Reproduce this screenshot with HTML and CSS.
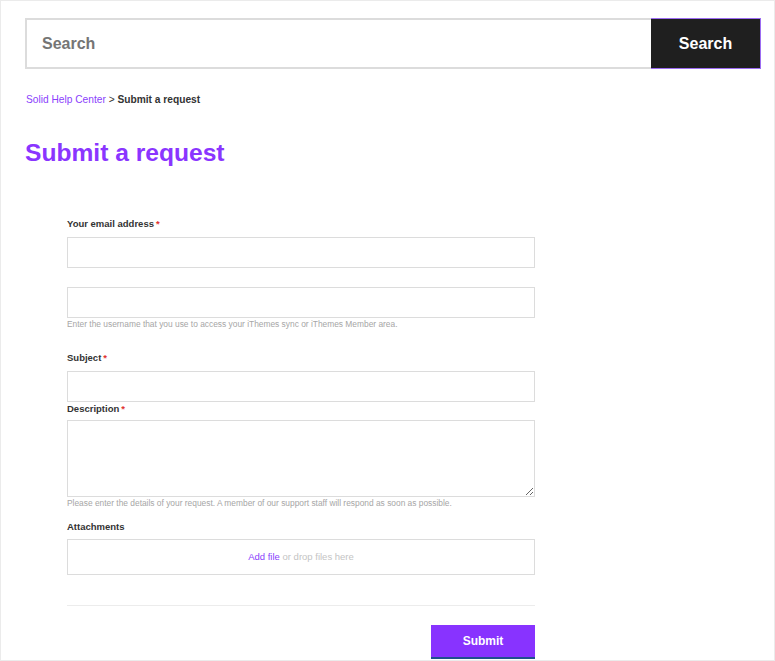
FILE: index.html
```html
<!DOCTYPE html>
<html lang="en">
<head>
    <meta charset="UTF-8">
    <title>Submit a request – Solid Help Center</title>
    <link rel="stylesheet" href="styles.css">
</head>
<body>
    <div class="page">
        <form class="search">
            <input type="search" class="search-input" placeholder="Search">
            <button type="submit" class="search-button">Search</button>
        </form>

        <nav class="breadcrumbs">
            <a href="#">Solid Help Center</a> &gt; <span class="current">Submit a request</span>
        </nav>

        <h1>Submit a request</h1>

        <form class="request-form">
            <label class="label label-first">Your email address<span class="req">*</span></label>
            <input type="email" class="field">

            <input type="text" class="field field-username">
            <p class="hint">Enter the username that you use to access your iThemes sync or iThemes Member area.</p>

            <label class="label label-subject">Subject<span class="req">*</span></label>
            <input type="text" class="field">

            <label class="label label-description">Description<span class="req">*</span></label>
            <textarea class="field field-area"></textarea>
            <p class="hint">Please enter the details of your request. A member of our support staff will respond as soon as possible.</p>

            <label class="label label-attach">Attachments</label>
            <div class="dropzone"><a href="#">Add file</a> or drop files here</div>

            <div class="form-footer">
                <button type="submit" class="submit">Submit</button>
            </div>
        </form>
    </div>
</body>
</html>
```

FILE: styles.css
```css
* {
    box-sizing: border-box;
}
body {
    margin: 0;
    font-family: 'Liberation Sans', Arial, sans-serif;
    color: #333;
    background: #fff;
}
.page {
    height: 661px;
    border: 1px solid #ebebeb;
    padding: 17px 13px 0 24px;
    overflow: hidden;
}
.search {
    display: flex;
    height: 51px;
}
.search-input {
    flex: 1;
    border: 2px solid #dcdcdc;
    border-right: none;
    padding: 0 15px;
    font-family: inherit;
    font-size: 16px;
    font-weight: bold;
    outline: none;
}
.search-input::placeholder {
    color: #757575;
}
.search-button {
    width: 110px;
    background: #1f1f1f;
    color: #fff;
    border: 1px solid #9c6cf2;
    border-left: none;
    font-family: inherit;
    font-size: 16px;
    font-weight: bold;
    cursor: pointer;
}
.breadcrumbs {
    margin-top: 24px;
    padding-left: 1px;
    font-size: 10.2px;
    line-height: 14px;
    color: #333;
}
.breadcrumbs a {
    color: #8a3ffc;
    text-decoration: none;
}
.breadcrumbs .current {
    font-weight: bold;
}
h1 {
    margin: 31px 0 0;
    font-size: 24.6px;
    line-height: 30px;
    color: #8a35ff;
}
.request-form {
    width: 468px;
    margin-left: 42px;
}
.label {
    display: block;
    font-size: 9.5px;
    font-weight: bold;
    line-height: 14px;
    color: #333;
}
.req {
    color: #e0332f;
    margin-left: 2px;
}
.label-first {
    margin-top: 49px;
    margin-bottom: 6px;
}
.label-subject {
    margin-top: 21px;
    margin-bottom: 6px;
}
.label-description {
    margin-bottom: 4px;
}
.label-attach {
    margin-top: 11px;
    margin-bottom: 5px;
}
.field {
    display: block;
    width: 100%;
    height: 31px;
    border: 1px solid #dcdcdc;
    padding: 0 8px;
    font-family: inherit;
}
.field-username {
    margin-top: 19px;
}
.field-area {
    height: 77px;
    resize: vertical;
}
.hint {
    margin: 1px 0 0;
    font-size: 8.4px;
    line-height: 11px;
    color: #a6a6a6;
}
.dropzone {
    height: 36px;
    border: 1px solid #dcdcdc;
    text-align: center;
    line-height: 34px;
    font-size: 9.5px;
    color: #c4c4c4;
}
.dropzone a {
    color: #8a3ffc;
    text-decoration: none;
}
.form-footer {
    margin-top: 30px;
    padding-top: 19px;
    border-top: 1px solid #ececec;
    text-align: right;
}
.submit {
    width: 104px;
    height: 34px;
    background: #8833ff;
    color: #fff;
    border: none;
    border-bottom: 2px solid #1f4f8f;
    font-family: inherit;
    font-size: 12px;
    font-weight: bold;
    cursor: pointer;
}
```
